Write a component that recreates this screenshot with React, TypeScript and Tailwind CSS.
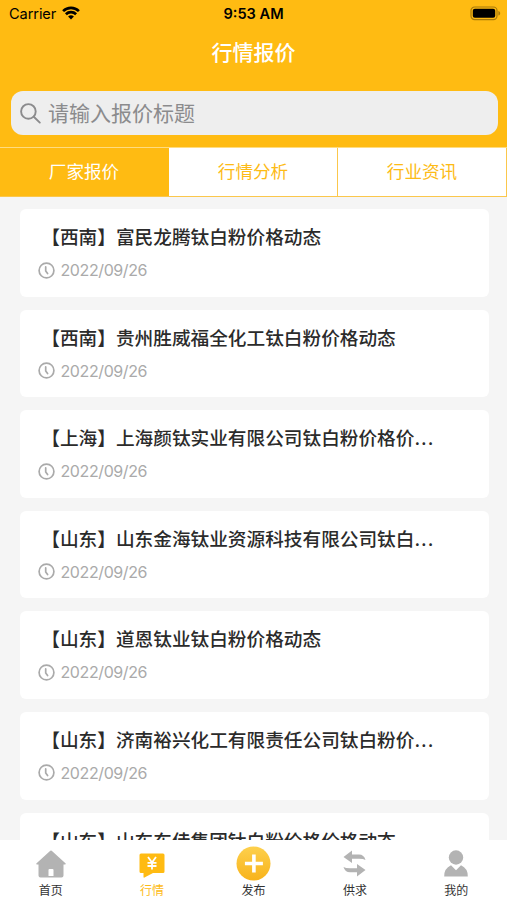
import type { ReactNode } from "react";

const tabs = ["厂家报价", "行情分析", "行业资讯"];

const quotes = [
  "【西南】富民龙腾钛白粉价格动态",
  "【西南】贵州胜威福全化工钛白粉价格动态",
  "【上海】上海颜钛实业有限公司钛白粉价格价...",
  "【山东】山东金海钛业资源科技有限公司钛白...",
  "【山东】道恩钛业钛白粉价格动态",
  "【山东】济南裕兴化工有限责任公司钛白粉价...",
  "【山东】山东东佳集团钛白粉价格价格动态",
];

function StatusBar() {
  return (
    <div className="flex h-7 items-center px-[9px] text-black">
      <div className="flex flex-1 items-center gap-[6px]">
        <span className="text-[14.6px] leading-7 tracking-[-0.1px]">Carrier</span>
        <svg className="-mt-0.5" width="18" height="14" viewBox="0 0 18 14" fill="none" stroke="currentColor" strokeWidth="2.7">
          <path d="M1.1 5.1a11.4 11.4 0 0 1 15.8 0" />
          <path d="M3.9 8.2a7.3 7.3 0 0 1 10.2 0" />
          <path d="M9 13.6 6.1 10.6a4.2 4.2 0 0 1 5.8 0z" fill="currentColor" stroke="none" />
        </svg>
      </div>
      <span className="text-[14.6px] font-semibold leading-7">9:53 AM</span>
      <div className="flex flex-1 justify-end">
        <svg className="-mr-[3px] -mt-0.5" width="31" height="15" viewBox="0 0 31 15">
          <rect x="1" y="1" width="26" height="12.6" rx="3.6" fill="none" stroke="#a87b0b" strokeWidth="1.2" />
          <rect x="2.8" y="2.8" width="22.4" height="9" rx="2" fill="#000" />
          <path d="M28.4 5v4.6c1.1-.4 1.8-1.2 1.8-2.3S29.5 5.4 28.4 5z" fill="#a87b0b" />
        </svg>
      </div>
    </div>
  );
}

function ClockIcon() {
  return (
    <svg width="17" height="17" viewBox="0 0 17 17" fill="none" stroke="#aaa" strokeWidth="1.7" strokeLinecap="round">
      <circle cx="8.5" cy="8.5" r="7.4" />
      <path d="M7.7 4.9v4l1.9 2.7" />
    </svg>
  );
}

function QuoteCard({ title }: { title: string }) {
  const truncated = title.endsWith("...");
  return (
    <article className="h-[87.6px] shrink-0 rounded-[6px] bg-white px-[18px] pt-[15px]">
      <h2 className="ml-[3.3px] h-7 whitespace-nowrap text-[18.67px] font-medium leading-7 text-[#2b2b2b]">
        {truncated ? title.slice(0, -3) : title}
        {truncated && <span className="tracking-[1px]">...</span>}
      </h2>
      <div className="mt-2 flex h-5 items-center gap-[5.5px] text-[#aaa]">
        <ClockIcon />
        <time className="text-[16px] leading-5 tracking-[-0.4px]">2022/09/26</time>
      </div>
    </article>
  );
}

function NavItem({ label, active, children }: { label: string; active?: boolean; children: ReactNode }) {
  return (
    <button className="flex flex-1 flex-col items-center pt-[5px]">
      <span className="flex h-[37px] items-center justify-center">{children}</span>
      <span className={active ? "text-[12px] leading-[17px] text-[#fdbb16]" : "text-[12px] leading-[17px] text-[#333]"}>{label}</span>
    </button>
  );
}

export default function App() {
  return (
    <div className="flex h-[900px] w-[507px] flex-col overflow-hidden bg-[#f5f5f5] font-[Inter,'Noto_Sans_CJK_SC',sans-serif]">
      <header className="h-[147px] shrink-0 bg-[#ffbb12]">
        <StatusBar />
        <h1 className="h-[63px] text-center text-[21px] font-medium leading-[50px] text-white">行情报价</h1>
        <div className="ml-[11px] mr-[9.5px] flex h-11 items-center rounded-[12px] bg-[#eee] pl-[9px] text-[#8b8b8d]">
          <svg width="21" height="21" viewBox="0 0 21 21" fill="none" stroke="currentColor" strokeWidth="1.9" strokeLinecap="round">
            <circle cx="8.4" cy="8.4" r="7.3" />
            <path d="m13.8 13.8 6 5.8" />
          </svg>
          <span className="ml-[7px] pt-0.5 text-[21px] leading-[42px]">请输入报价标题</span>
        </div>
      </header>
      <nav className="grid h-[50px] shrink-0 grid-cols-3 border-b border-t border-b-[#fbc74c] border-t-[#ffdc80] bg-white text-[17.6px]">
        {tabs.map((tab, i) => (
          <button
            key={tab}
            className={
              i === 0
                ? "border-r border-[#ffbb12] bg-[#ffbb12] text-white"
                : "border-r border-[#fbc74c] text-[#fdbb16]"
            }
          >
            {tab}
          </button>
        ))}
      </nav>
      <main className="flex min-h-0 flex-1 flex-col gap-[13px] overflow-hidden pl-5 pr-[18.5px] pt-3">
        {quotes.map((title) => (
          <QuoteCard key={title} title={title} />
        ))}
      </main>
      <footer className="flex h-[60px] shrink-0 bg-white">
        <NavItem label="首页">
          <svg width="30" height="28" viewBox="0 0 30 28" fill="#b3b3b3">
            <path fillRule="evenodd" d="M14.3.8Q15 .2 15.7.8L29.7 13.5Q30 14.5 29 14.5H27.5V25.500Q27.5 27.500 25.5 27.500H4.500Q2.500 27.500 2.500 25.500V14.500H1Q0 14.500.300 13.500ZM12.500 26H17.500V20Q17.500 19 16.500 19H13.500Q12.500 19 12.500 20Z" />
          </svg>
        </NavItem>
        <NavItem label="行情" active>
          <svg className="mt-[3px]" width="26" height="25" viewBox="0 0 26 25">
            <path d="M2 .5H24Q25.500.5 25.500 2V18.500Q25.500 20 24 20H14L5.500 24.500Q4.500 25 4.500 23.700V20H2Q.500 20 .500 18.500V2Q.500.500 2 .500Z" fill="#ffbb12" />
            <path d="m9 4 4 5.500L17 4M13 9.500V16.500M8.500 9.800h9M8.500 13h9" fill="none" stroke="#fff" strokeWidth="1.800" />
          </svg>
        </NavItem>
        <NavItem label="发布">
          <svg width="35" height="35" viewBox="0 0 35 35">
            <defs>
              <linearGradient id="publish" x1="0" y1="0" x2="0" y2="1">
                <stop offset="0" stopColor="#fdd04d" />
                <stop offset="1" stopColor="#f8b31b" />
              </linearGradient>
            </defs>
            <circle cx="17.5" cy="17.5" r="17" fill="url(#publish)" />
            <path d="M17.9 8.500v18M8.900 17.500h18" stroke="#fff" strokeWidth="3.600" />
          </svg>
        </NavItem>
        <NavItem label="供求">
          <svg width="23" height="27" viewBox="0 0 23 27" fill="#b3b3b3">
            <path d="M9 .5V4.500H16Q21 4.500 22.500 10Q20.500 8.800 16 8.800H9V13L.5 7Z" />
            <path d="M14 26.500V22.300H7Q2 22.300 .5 17Q2.500 18.300 7 18.300H14V14L22.500 20Z" />
          </svg>
        </NavItem>
        <NavItem label="我的">
          <svg width="24" height="27" viewBox="0 0 24 27" fill="#b3b3b3">
            <circle cx="12" cy="7.5" r="7.2" />
            <path d="M7 15.300 12 20.200 17 15.300Q24 18.500 23.800 26.500H.200Q0 18.500 7 15.300Z" />
          </svg>
        </NavItem>
      </footer>
    </div>
  );
}
